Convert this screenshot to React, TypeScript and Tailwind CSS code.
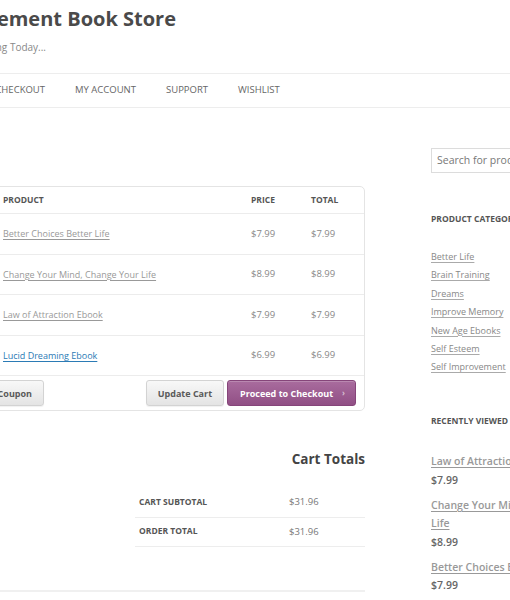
const cartItems = [
  { name: "Better Choices Better Life", price: "$7.99", total: "$7.99" },
  { name: "Change Your Mind, Change Your Life", price: "$8.99", total: "$8.99" },
  { name: "Law of Attraction Ebook", price: "$7.99", total: "$7.99" },
  { name: "Lucid Dreaming Ebook", price: "$6.99", total: "$6.99", active: true },
];

const categories = [
  "Better Life",
  "Brain Training",
  "Dreams",
  "Improve Memory",
  "New Age Ebooks",
  "Self Esteem",
  "Self Improvement",
];

const recentlyViewed = [
  { name: "Law of Attraction Ebook", price: "$7.99" },
  { name: "Change Your Mind, Change Your Life", price: "$8.99" },
  { name: "Better Choices Better Life", price: "$7.99" },
];

export default function App() {
  return (
    <div className="w-[510px] h-[600px] overflow-hidden bg-white font-['Open_Sans',sans-serif] text-[#666]">
      {/* Header */}
      <header className="pt-[5px]">
        <div className="w-[176px] h-[28px] flex justify-end whitespace-nowrap">
          <h1 className="shrink-0 text-[20px] leading-[28px] font-bold text-[#4a4a4a]">
            Self Improvement Book Store
          </h1>
        </div>
        <div className="mt-[5.5px] w-[46px] h-[16px] flex justify-end whitespace-nowrap">
          <p className="shrink-0 text-[10px] leading-[16px] text-[#888]">Start Improving Today...</p>
        </div>
      </header>

      {/* Navigation */}
      <nav className="mt-[18.5px] w-[510px] h-[35px] border-y border-[#ededed] flex items-center gap-[30px] text-[9.5px] uppercase text-[#666] whitespace-nowrap">
        <div className="w-[45px] flex justify-end">
          <div className="shrink-0 flex gap-[30px]">
            <span>Cart</span>
            <span>Checkout</span>
          </div>
        </div>
        <span>My Account</span>
        <span>Support</span>
        <span>Wishlist</span>
      </nav>

      <div className="flex items-start">
        {/* Main column */}
        <main className="w-[365px] shrink-0 mt-[78px]">
          <CartTable />
          <CartTotals />
          <div className="mt-[43.5px] h-[2px] w-[365px] bg-[#f0f0f0]" />
        </main>

        {/* Sidebar */}
        <aside className="ml-[66px] w-[175px] shrink-0 mt-[38px]">
          <input
            className="w-full h-[25px] border border-[#dcdcdc] pl-[5px] text-[10.5px] text-[#777] placeholder:text-[#777] outline-none"
            placeholder="Search for products…"
          />

          <h3 className="mt-[39.7px] text-[8.5px] leading-[14px] font-bold uppercase text-[#555] whitespace-nowrap">
            Product Categories
          </h3>
          <ul className="mt-[21.8px]">
            {categories.map((c) => (
              <li key={c} className="text-[9px] leading-[18.4px] whitespace-nowrap">
                <a className="text-[#888] underline underline-offset-2 decoration-[#aaa]">{c}</a>
              </li>
            ))}
          </ul>

          <h3 className="mt-[36.7px] text-[8.5px] leading-[14px] font-bold uppercase text-[#555] whitespace-nowrap">
            Recently Viewed
          </h3>
          <ul className="mt-[24.8px] flex flex-col gap-[6.6px]">
            {recentlyViewed.map((p) => (
              <li key={p.name} className="text-[10.5px] leading-[18.4px]">
                <a className="font-semibold text-[#999] underline underline-offset-2">{p.name}</a>
                <div className="font-semibold text-[#666]">{p.price}</div>
              </li>
            ))}
          </ul>
        </aside>
      </div>
    </div>
  );
}

/* --------------------- Cart Table --------------------- */
const CartTable = () => (
  <div className="-ml-[10px] w-[375px] border border-[#e4e4e4] rounded-[5px]">
    <div className="h-[27px] border-b border-[#ececec] grid grid-cols-[248px_60px_1fr] items-center pl-[12px] text-[8.5px] font-bold uppercase text-[#555]">
      <span>Product</span>
      <span>Price</span>
      <span>Total</span>
    </div>

    {cartItems.map((item) => (
      <div
        key={item.name}
        className="h-[40.6px] border-b border-[#ececec] grid grid-cols-[248px_60px_1fr] items-center pl-[12px] text-[9px]"
      >
        <a
          className={`underline underline-offset-2 whitespace-nowrap ${
            item.active ? "text-[#2b7bb5]" : "text-[#999]"
          }`}
        >
          {item.name}
        </a>
        <span className="text-[9.5px] text-[#888]">{item.price}</span>
        <span className="text-[9.5px] text-[#888]">{item.total}</span>
      </div>
    ))}

    {/* Actions */}
    <div className="h-[34px] flex items-center justify-between pr-[8px]">
      <div className="w-[53px] flex justify-end">
        <div className="shrink-0 flex items-center gap-[4px]">
          <input className="w-[120px] h-[26px] border border-[#ddd]" placeholder="Coupon code" />
          <GrayButton>Apply Coupon</GrayButton>
        </div>
      </div>
      <div className="flex items-center gap-[3px]">
        <GrayButton>Update Cart</GrayButton>
        <button className="h-[26px] pl-[12px] pr-[10px] flex items-center rounded-[3px] border border-[#86457a] bg-gradient-to-b from-[#a96c9e] to-[#914f85] text-white text-[9px] font-bold whitespace-nowrap shadow-[inset_0_1px_0_rgba(255,255,255,0.2)]">
          Proceed to Checkout
          <span className="ml-[9px] text-[8px] text-white/60">›</span>
        </button>
      </div>
    </div>
  </div>
);

const GrayButton = ({ children }: { children: React.ReactNode }) => (
  <button className="h-[26px] px-[11px] rounded-[3px] border border-[#d3d3d3] bg-gradient-to-b from-[#f8f8f8] to-[#e4e4e4] text-[9px] font-bold text-[#5a5a5a] whitespace-nowrap shadow-[0_1px_1px_rgba(0,0,0,0.06)]">
    {children}
  </button>
);

/* --------------------- Cart Totals --------------------- */
const CartTotals = () => (
  <section className="mt-[38px]">
    <h2 className="text-right text-[13.5px] leading-[20px] font-bold text-[#444]">Cart Totals</h2>
    <div className="mt-[18.7px] ml-[135px] w-[230px]">
      <div className="h-[29.5px] border-b border-[#ededed] grid grid-cols-[154px_1fr] items-center">
        <span className="pl-[4px] text-[8.5px] font-bold uppercase text-[#555]">Cart Subtotal</span>
        <span className="text-[9.5px] text-[#777]">$31.96</span>
      </div>
      <div className="h-[29.3px] border-b border-[#ededed] grid grid-cols-[154px_1fr] items-center">
        <span className="pl-[4px] text-[8.5px] font-bold uppercase text-[#555]">Order Total</span>
        <span className="text-[9.5px] text-[#777]">$31.96</span>
      </div>
    </div>
  </section>
);
